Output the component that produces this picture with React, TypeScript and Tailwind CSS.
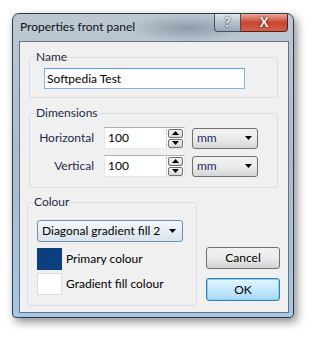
import React from "react";

const F = "font-['Lato','Noto_Sans',sans-serif]";

function Arrow({ up }: { up?: boolean }) {
  return (
    <svg width="7" height="4" viewBox="0 0 7 4" className="block">
      {up ? <path d="M0 4 L3.5 0 L7 4 Z" fill="#000" /> : <path d="M0 0 L7 0 L3.5 4 Z" fill="#000" />}
    </svg>
  );
}

function Spin() {
  return (
    <div className="flex flex-col gap-[1px] mr-[1px]">
      <div className="w-[15px] h-[9px] rounded-[2px] border border-[#707070] bg-gradient-to-b from-[#f4f4f4] to-[#d8d8d8] flex items-center justify-center">
        <Arrow up />
      </div>
      <div className="w-[15px] h-[9px] rounded-[2px] border border-[#707070] bg-gradient-to-b from-[#f4f4f4] to-[#d8d8d8] flex items-center justify-center">
        <Arrow />
      </div>
    </div>
  );
}

function NumInput({ value }: { value: string }) {
  return (
    <div className="w-[81px] h-[22px] border border-[#e3e9ef] border-t-[#abadb3] bg-white flex items-center">
      <span className="flex-1 pl-[3px] text-black leading-none">{value}</span>
      <div className="w-[1px] h-[18px] border-l border-dotted border-[#b0b0b0] mr-[1px]" />
      <Spin />
    </div>
  );
}

function MmSelect() {
  return (
    <div className="w-[66px] h-[21px] rounded-[3px] border border-[#707070] bg-gradient-to-b from-[#f2f2f2] via-[#ebebeb] to-[#d6d6d6] flex items-center pl-[4px] pr-[5px]">
      <span className="flex-1 text-[#1a2a6a] leading-none">mm</span>
      <Arrow />
    </div>
  );
}

function Group({ label, className, children }: { label: string; className: string; children?: React.ReactNode }) {
  return (
    <div className={`relative border border-[#d5dfe5] rounded-[3px] ${className}`}>
      <span className="absolute left-[5px] top-[-9px] px-[1px] bg-[#f0f0f0] leading-[16px] text-[#1e2b4a]">{label}</span>
      {children}
    </div>
  );
}

export default function App() {
  return (
    <div className={`w-[315px] h-[339px] bg-white overflow-hidden text-[12px] ${F}`}>
      <div className="ml-[12px] mt-[13px] w-[282px] h-[305px] rounded-t-[7px] rounded-b-[4px] border border-[#2f3b47] bg-gradient-to-b from-[#bcc7d2] via-[#a9bccf] to-[#a6c6e6] shadow-[3px_4px_10px_rgba(0,0,0,0.45)] flex flex-col overflow-hidden">
        {/* title bar */}
        <div className="relative h-[27px] flex items-start shrink-0 bg-[radial-gradient(ellipse_60px_14px_at_175px_14px,rgba(90,105,120,0.45),transparent)]">
          <span className="relative pl-[7px] pt-[6px] text-[12px] text-[#111] leading-[14px]">Properties front panel</span>
          <div className="relative ml-auto mr-[5px] flex">
            <div className="w-[27px] h-[18px] rounded-bl-[4px] border border-[#45505c] border-t-0 bg-gradient-to-b from-[#dfe6ee] via-[#b6c2ce] to-[#9aa9b8] flex items-center justify-center text-white font-bold text-[13px] leading-none [text-shadow:0_0_2px_#222,0_0_1px_#222]">
              ?
            </div>
            <div className="w-[47px] h-[18px] rounded-br-[4px] border border-[#5a2018] border-t-0 border-l-0 bg-gradient-to-b from-[#e8a898] via-[#c8452f] to-[#d0604a] flex items-center justify-center text-white font-bold text-[13px] leading-none [text-shadow:0_0_2px_#311,0_0_1px_#311]">
              X
            </div>
          </div>
        </div>
        {/* client */}
        <div className="flex-1 ml-[6px] mr-[4px] mb-[4px] border border-[#64727f] bg-[#f0f0f0] flex flex-col">
          <Group label="Name" className="ml-[9px] mt-[15px] w-[249px] h-[41px]">
            <div className="ml-[14px] mt-[10px] w-[201px] h-[21px] border border-[#7eb4ea] border-t-[#569de5] bg-white flex items-center pl-[2px] text-black leading-none">
              Softpedia Test
            </div>
          </Group>
          <Group label="Dimensions" className="ml-[9px] mt-[15px] w-[249px] h-[75px] flex flex-col gap-[6px] pt-[13px]">
            <div className="flex items-center">
              <span className="w-[64px] text-right text-[#1e2b4a] leading-none">Horizontal</span>
              <div className="ml-[10px]"><NumInput value="100" /></div>
              <div className="ml-[7px]"><MmSelect /></div>
            </div>
            <div className="flex items-center">
              <span className="w-[64px] text-right text-[#1e2b4a] leading-none">Vertical</span>
              <div className="ml-[10px]"><NumInput value="100" /></div>
              <div className="ml-[7px]"><MmSelect /></div>
            </div>
          </Group>
          <div className="flex mt-[14px]">
            <Group label="Colour" className="ml-[7px] w-[170px] h-[104px] flex flex-col pl-[9px] pt-[17px]">
              <div className="w-[146px] h-[22px] rounded-[3px] border border-[#6f8fae] bg-gradient-to-b from-[#f4f7fa] to-[#d9e3ec] flex items-center pl-[4px] pr-[6px]">
                <span className="flex-1 text-black leading-none">Diagonal gradient fill 2</span>
                <Arrow />
              </div>
              <div className="mt-[6px] flex items-center">
                <div className="w-[25px] h-[22px] bg-[#0b3f7e]" />
                <span className="ml-[4px] text-black leading-none">Primary colour</span>
              </div>
              <div className="mt-[3px] flex items-center">
                <div className="w-[25px] h-[22px] bg-white border border-[#dcdcdc]" />
                <span className="ml-[4px] text-black leading-none">Gradient fill colour</span>
              </div>
            </Group>
            <div className="ml-[9px] pt-[45px] flex flex-col gap-[9px]">
              <div className="w-[74px] h-[22px] rounded-[3px] border border-[#707070] bg-gradient-to-b from-[#f2f2f2] via-[#ebebeb] to-[#d4d4d4] flex items-center justify-center text-black leading-none">
                Cancel
              </div>
              <div className="w-[74px] h-[23px] rounded-[3px] border border-[#3c7fb1] bg-gradient-to-b from-[#e6f5fd] via-[#c4e8fb] to-[#a9daf5] shadow-[inset_0_0_0_1px_#7ed0f6] flex items-center justify-center text-black leading-none">
                OK
              </div>
            </div>
          </div>
        </div>
      </div>
    </div>
  );
}
